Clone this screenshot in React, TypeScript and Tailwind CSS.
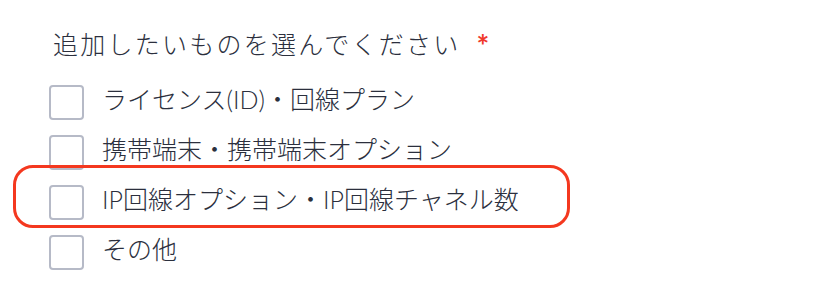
const options = [
  "ライセンス(ID)・回線プラン",
  "携帯端末・携帯端末オプション",
  "IP回線オプション・IP回線チャネル数",
  "その他",
];

export default function App() {
  return (
    <div
      className="relative h-[303px] w-[814px] overflow-hidden bg-white font-light text-[#2b2f3d]"
      style={{ fontFamily: 'Lato, "Noto Sans CJK JP", sans-serif' }}
    >
      <div className="flex items-start pl-[53px] pt-[26px]">
        <span className="text-[25px] leading-[36px] tracking-[0.09em]">
          追加したいものを選んでください
        </span>
        <span className="ml-[16px] mt-[3px] text-[30px] font-bold leading-[32px] text-[#f0392b]">*</span>
      </div>

      <ul className="mt-[23px] flex flex-col gap-[15px] pl-[49px]">
        {options.map((label) => (
          <li key={label} className="flex h-[35px] items-center gap-[18px]">
            <span className="h-[35px] w-[35px] shrink-0 rounded-[4px] border-2 border-[#b6bac7] bg-white" />
            <span className="pb-[6px] text-[25px] leading-[35px]">{label}</span>
          </li>
        ))}
      </ul>

      {/* annotation around the third option */}
      <div className="pointer-events-none absolute left-[13px] top-[165px] h-[63px] w-[557px] rounded-[20px] border-[3px] border-[#f4381f]" />
    </div>
  );
}
